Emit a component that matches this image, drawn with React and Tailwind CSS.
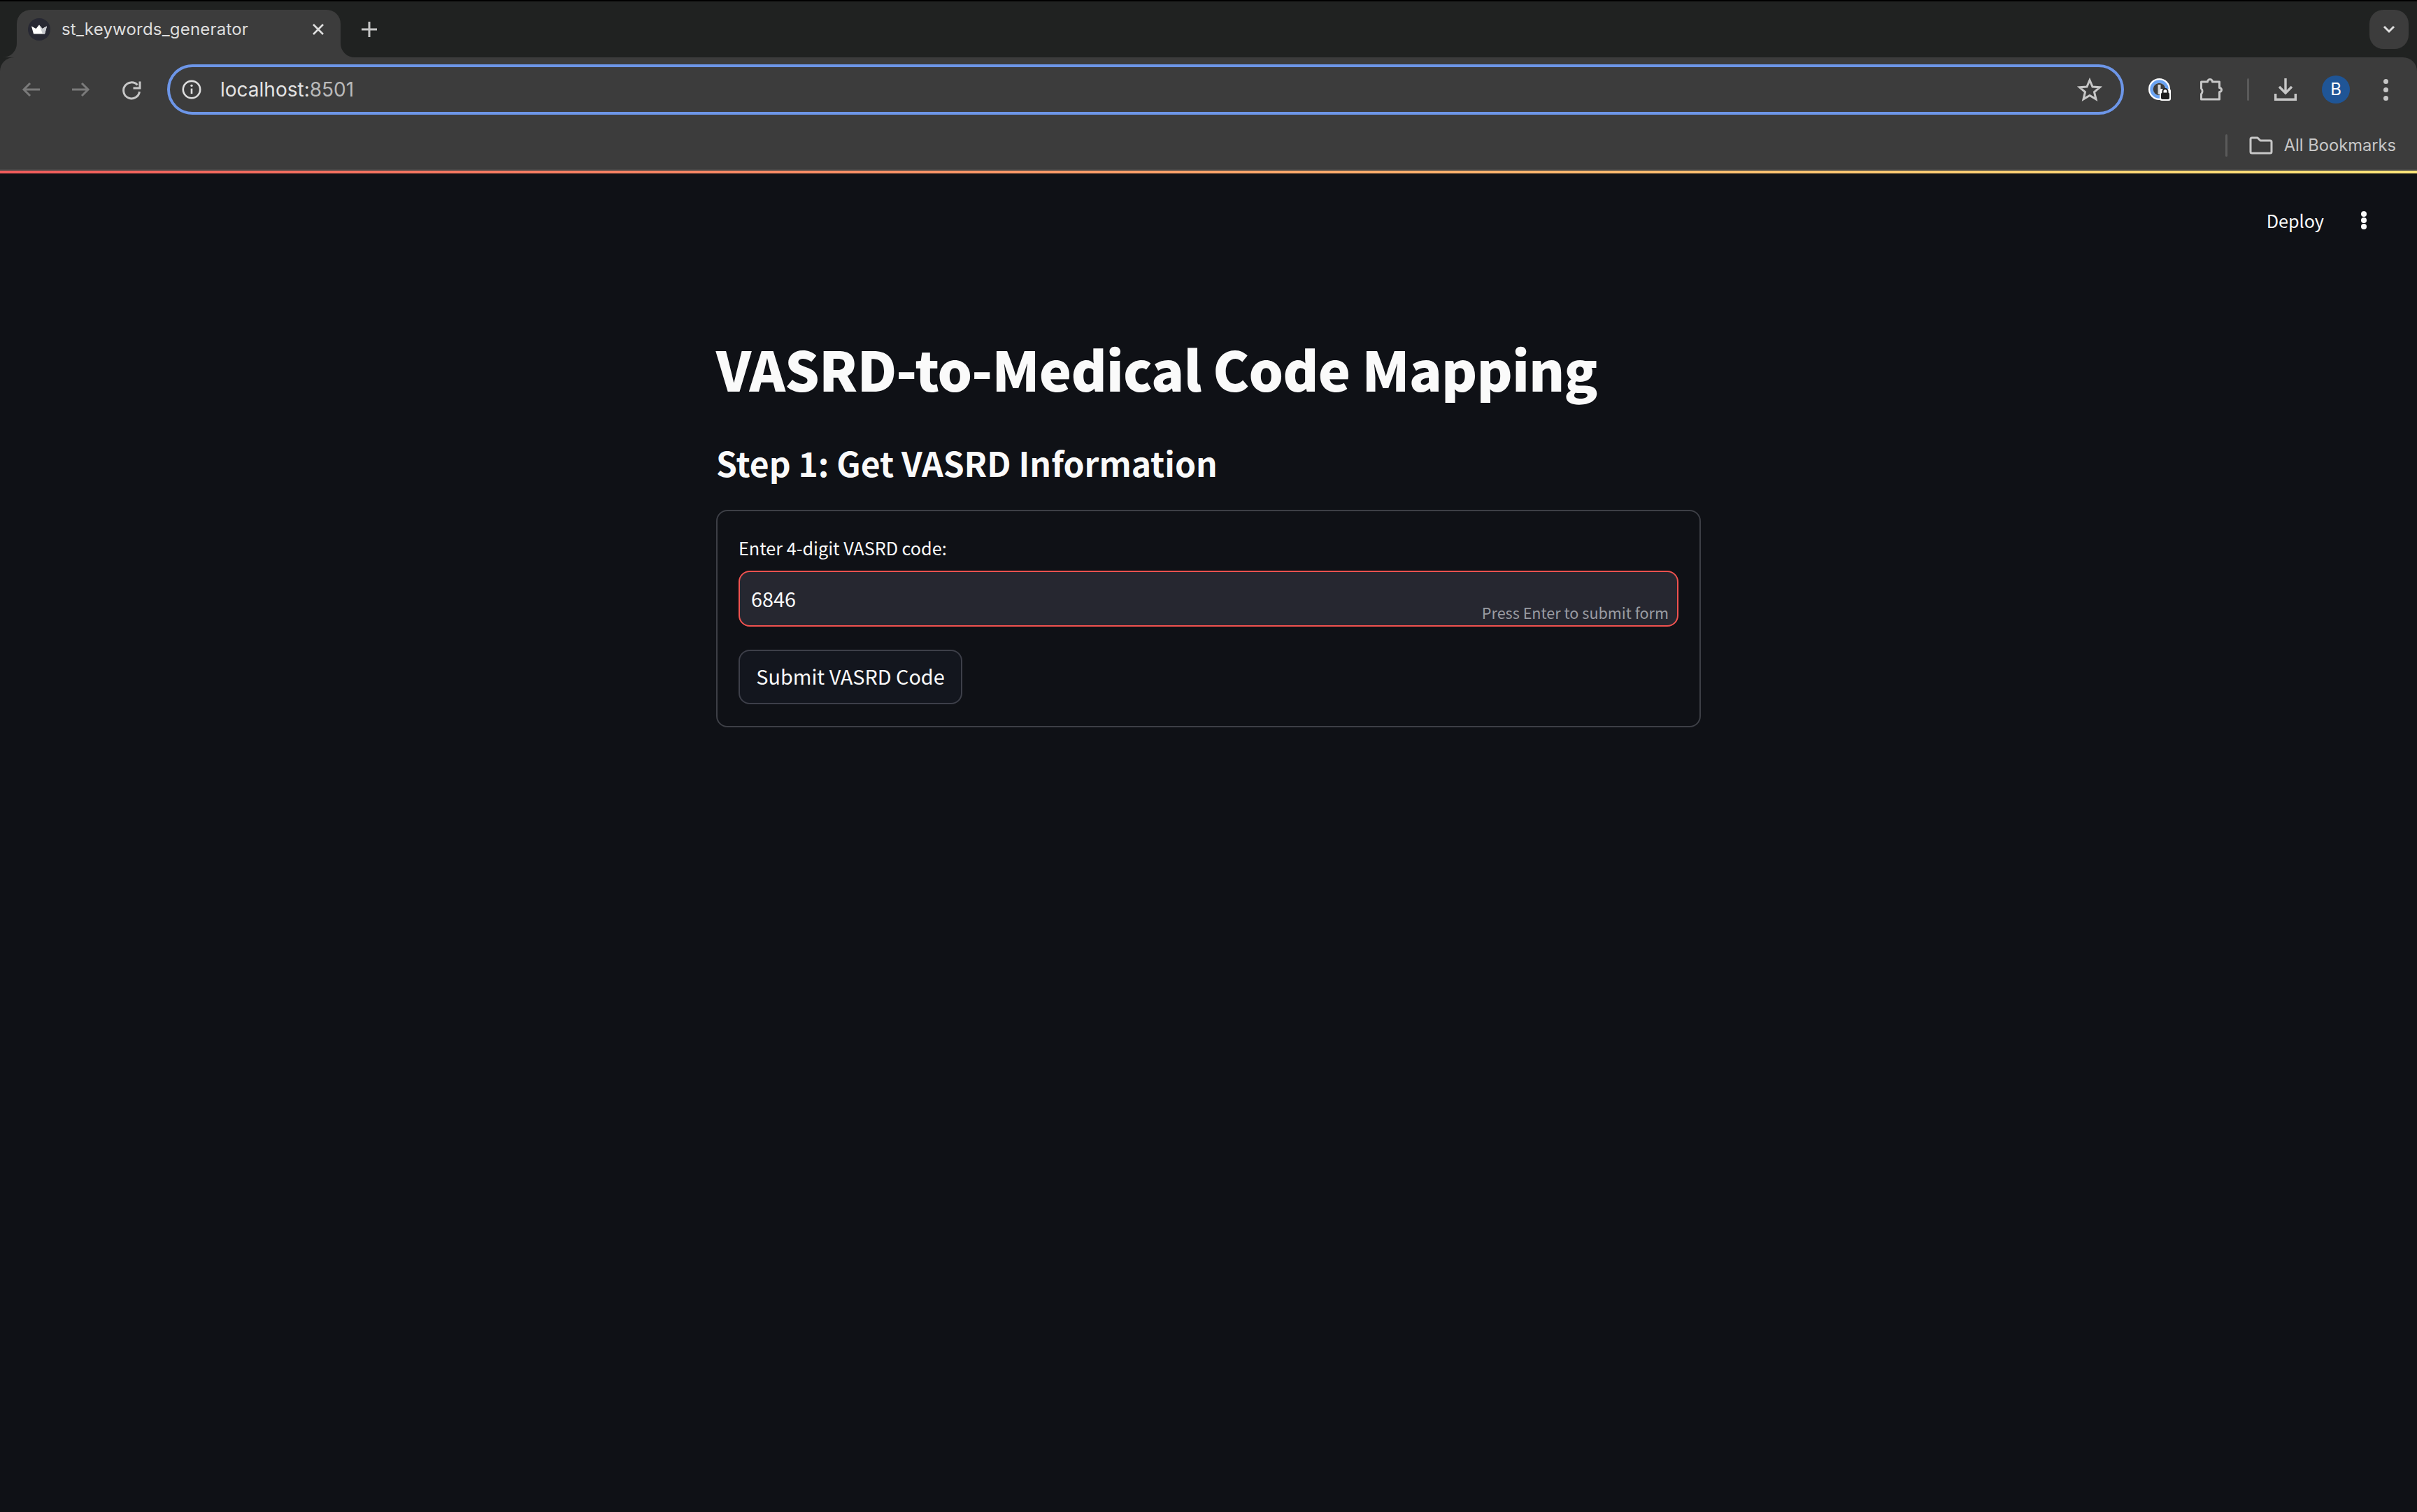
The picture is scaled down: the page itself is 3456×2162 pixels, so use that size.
import React from "react";

const ui = { fontFamily: '"Inter", "Liberation Sans", sans-serif' };
const st = { fontFamily: '"Noto Sans CJK SC", "Noto Sans", sans-serif' };

function Crown() {
  return (
    <svg width="32" height="32" viewBox="0 0 32 32">
      <circle cx="16" cy="16" r="16" fill="#272833" />
      <path d="M5 11.500l6.500 3.500 4.500-5.500 4.500 5.500 6.500-3.500-3 11h-16z" fill="#ffffff" />
      <path d="M16 9.500l4.500 5.500 6.500-3.500-3 11h-3z" fill="#c9cbd1" />
    </svg>
  );
}

function Stroke({ size = 32, color = "#c7c7c7", width = 2.6, children, cls = "" }) {
  return (
    <svg width={size} height={size} viewBox={`0 0 ${size === 30 ? 32 : size} ${size === 30 ? 32 : size}`} fill="none" stroke={color} strokeWidth={width} className={cls}>
      {children}
    </svg>
  );
}

function OnePassword() {
  return (
    <svg width="32" height="32" viewBox="0 0 32 32" className="block">
      <circle cx="15.500" cy="15.500" r="15.500" fill="#ffffff" />
      <circle cx="15.500" cy="15.500" r="11" fill="none" stroke="#6aa3f2" strokeWidth="4.500" />
      <circle cx="15.500" cy="15.500" r="8.800" fill="#3c3c3c" />
      <rect x="13.500" y="9" width="4" height="14" fill="#d4d4d4" />
      <rect x="16" y="15" width="16" height="17" rx="3" fill="#ffffff" />
      <rect x="18" y="20.500" width="12" height="9.500" rx="2" fill="#1d1d1d" />
      <path d="M20.500 21v-2.500a3.500 3.500 0 0 1 7 0v2.500" fill="none" stroke="#1d1d1d" strokeWidth="2" />
    </svg>
  );
}

function Dots({ size = 6, gap = 6, color = "#c7c7c7" }) {
  return (
    <div className="flex flex-col items-center" style={{ gap }}>
      <span className="block rounded-full" style={{ width: size, height: size, background: color }} />
      <span className="block rounded-full" style={{ width: size, height: size, background: color }} />
      <span className="block rounded-full" style={{ width: size, height: size, background: color }} />
    </div>
  );
}

function TabStrip() {
  return (
    <div className="flex h-[80px] items-start pt-[12px]">
      <div className="relative ml-[24px] flex h-[68px] w-[463px] items-start rounded-t-[20px] bg-[#3c3c3c] pl-[16px] pt-[12px]">
        <svg width="20" height="20" viewBox="0 0 20 20" className="absolute bottom-0 left-[-20px]">
          <path d="M20 0V20H0A20 20 0 0 0 20 0Z" fill="#3c3c3c" />
        </svg>
        <svg width="20" height="20" viewBox="0 0 20 20" className="absolute bottom-0 right-[-20px]">
          <path d="M0 0V20H20A20 20 0 0 1 0 0Z" fill="#3c3c3c" />
        </svg>
        <Crown />
        <span className="ml-[16px] w-[355px] text-[24px] leading-[32px] tracking-[0.2px] text-[#dedede]" style={ui}>st_keywords_generator</span>
        <Stroke size={24} color="#dedede" width={2.6} cls="mt-[4px]">
          <path d="M5 5l14 14M19 5L5 19" />
        </Stroke>
      </div>
      <Stroke size={28} color="#c7c7c7" width={3} cls="ml-[27px] mt-[14px]">
        <path d="M14 3v22M3 14h22" />
      </Stroke>
      <div className="ml-auto mr-[12px] flex h-[56px] w-[56px] items-center justify-center rounded-[20px] bg-[#3c3c3c]">
        <Stroke size={24} color="#dedede" width={3}>
          <path d="M5 8l7 7 7-7" />
        </Stroke>
      </div>
    </div>
  );
}

function Toolbar() {
  return (
    <div className="flex h-[92px] items-center pl-[28px]">
      <Stroke color="#7a7a7a" width={3}><path d="M29 16H6M15 7l-9 9 9 9" /></Stroke>
      <Stroke color="#7a7a7a" width={3} cls="ml-[40px]"><path d="M3 16h23M17 7l9 9-9 9" /></Stroke>
      <Stroke color="#c7c7c7" width={3} cls="ml-[40px]">
        <path d="M27.500 19a11.500 11.500 0 1 1-3-9.500" />
        <path d="M28 4.500v9.500h-9.500" />
      </Stroke>
      <div className="ml-[35px] flex h-[72px] w-[2798px] items-center rounded-[36px] border-4 border-[#6d96e8] pl-[16px] pr-[27px]">
        <Stroke size={30} color="#dedede" width={2.8}>
          <circle cx="16" cy="16" r="13" />
          <path d="M16 14.500v8" />
          <circle cx="16" cy="10" r="1.800" fill="#dedede" stroke="none" />
        </Stroke>
        <span className="ml-[26px] text-[28px] leading-[36px] text-[#e3e3e3]" style={ui}>localhost:<span className="text-[#b9b9b9]">8501</span></span>
        <Stroke size={36} color="#c7c7c7" width={3} cls="ml-auto">
          <path d="M18 4.500l4 9.500 10.500.8-8 6.800 2.500 10.200-9-5.400-9 5.400 2.500-10.200-8-6.800 10.500-.8z" />
        </Stroke>
      </div>
      <div className="ml-[35px]"><OnePassword /></div>
      <Stroke size={34} color="#c7c7c7" width={3} cls="ml-[41px]">
        <path d="M2.500 6h9a3.500 3.500 0 0 1 7 0h10v8.500a3 3 0 0 1 0 6V31h-26v-7.500a6 6 0 0 0 0-8z" strokeLinejoin="round" />
      </Stroke>
      <div className="ml-[34px] h-[32px] w-[3px] rounded bg-[#5a5a5a]" />
      <Stroke size={32} color="#c7c7c7" width={3.4} cls="ml-[36px]">
        <path d="M16 0v21M7 12l9 9 9-9M1.700 22v8.300h28.600V22" />
      </Stroke>
      <div className="ml-[36px] flex h-[40px] w-[40px] items-center justify-center rounded-full bg-[#1f5596] text-[24px] leading-none text-white" style={ui}>B</div>
      <div className="ml-[48px]"><Dots size={7} gap={5} /></div>
    </div>
  );
}

function Bookmarks() {
  return (
    <div className="flex h-[70px] items-start justify-end border-b-2 border-b-[#474747] pr-[30px] pt-[18px]">
      <div className="h-[32px] w-[3px] rounded bg-[#5a5a5a]" />
      <Stroke size={36} color="#c7c7c7" width={3} cls="ml-[30px] mt-[-2px]">
        <path d="M3 9a2 2 0 0 1 2-2h8l4 4h14a2 2 0 0 1 2 2v14a2 2 0 0 1-2 2H5a2 2 0 0 1-2-2z" strokeLinejoin="round" />
      </Stroke>
      <span className="ml-[15px] text-[23.7px] leading-[32px] text-[#c7c7c7]" style={ui}>All Bookmarks</span>
    </div>
  );
}

export default function App() {
  return (
    <div className="flex h-[2162px] w-[3456px] flex-col overflow-hidden bg-[#0f1116]">
      <div className="h-[2px] bg-black" />
      <div className="bg-[#202221]">
        <TabStrip />
        <div className="rounded-t-[20px] bg-[#3c3c3c]">
          <Toolbar />
          <Bookmarks />
        </div>
      </div>
      <div className="h-[4px] bg-gradient-to-r from-[#f15b5b] to-[#fde679]" />
      <main className="relative flex-1" style={st}>
        <div className="absolute right-[72px] top-[49px] flex items-center">
          <span className="text-[25.2px] leading-[36px] text-[#fafafa]">Deploy</span>
          <div className="ml-[53px]"><Dots size={8} gap={1} color="#fafafa" /></div>
        </div>
        <div className="mx-auto w-[1408px] pt-[228px]">
          <h1 className="whitespace-nowrap text-[78px] font-black leading-[100px] tracking-[-0.9px] text-[#fafafa]">VASRD-to-Medical Code Mapping</h1>
          <h2 className="mt-[51px] text-[48px] font-semibold leading-[68px] text-[#fafafa]">Step 1: Get VASRD Information</h2>
          <div className="mt-[34px] h-[311px] rounded-[16px] border-2 border-[#3d3f46] px-[30px] pt-[32px]">
            <div className="text-[25.2px] leading-[40px] text-[#fafafa]">Enter 4-digit VASRD code:</div>
            <div className="relative mt-[13px] flex h-[80px] items-center rounded-[16px] border-2 border-[#f0524f] bg-[#262730] pl-[16px]">
              <span className="text-[28.8px] leading-[44px] text-[#fafafa]">6846</span>
              <span className="absolute bottom-[2px] right-[12px] text-[21.6px] leading-[32px] text-[#9a9ca3]">Press Enter to submit form</span>
            </div>
            <div className="mt-[33px] flex h-[78px] w-[320px] items-center justify-center rounded-[16px] border-2 border-[#3d3f49] bg-[#13161e] pb-[2px] text-[28.8px] leading-[44px] text-[#fafafa]">Submit VASRD Code</div>
          </div>
        </div>
      </main>
    </div>
  );
}
